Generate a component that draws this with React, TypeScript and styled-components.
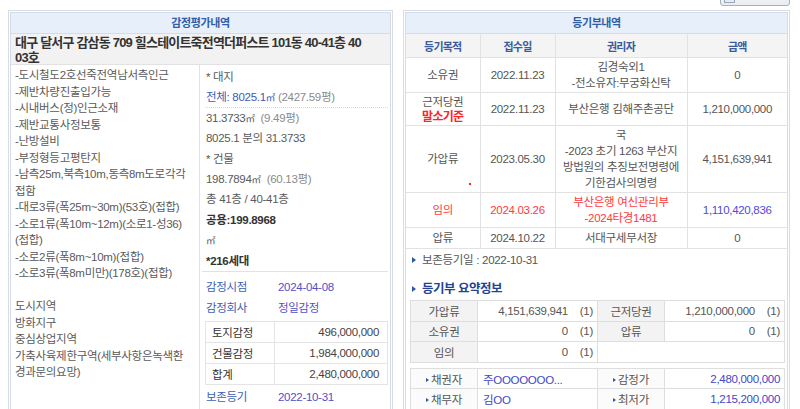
import React from 'react';
import styled, { createGlobalStyle } from 'styled-components';

const GlobalStyle = createGlobalStyle`
  html, body {
    margin: 0;
    padding: 0;
    background: #ffffff;
  }
  body {
    font-family: "Liberation Sans", "Noto Sans CJK KR", sans-serif;
    font-size: 11.5px;
    letter-spacing: -0.3px;
    color: #555555;
  }
`;

const Page = styled.div`
  display: flex;
  flex-direction: column;
  width: 800px;
  height: 409px;
  overflow: hidden;
`;

// 상단 잘린 버튼
const TopBar = styled.div`
  flex-shrink: 0;
  height: 10px;
  display: flex;
  justify-content: flex-end;
  padding-right: 10px;
  overflow: hidden;
`;

const TopButton = styled.div`
  width: 70px;
  height: 22px;
  margin-top: -16px;
  box-sizing: border-box;
  border: 1px solid #aab0b9;
  border-radius: 3px;
  background: linear-gradient(#ffffff, #e9ecf0);
  display: flex;
  align-items: flex-end;
  padding: 0 0 2px 3px;
`;

const TopButtonIcon = styled.span`
  width: 11px;
  height: 10px;
  box-sizing: border-box;
  border: 1px solid #9aa8bb;
  background: #e3eaf4;
`;

const Columns = styled.div`
  flex-shrink: 0;
  display: flex;
  gap: 10px;
  padding-left: 8px;
  align-items: flex-start;
`;

const Panel = styled.section<{ $width: number }>`
  width: ${(p) => p.$width}px;
  height: 412px;
  box-sizing: border-box;
  border: 1px solid #d9dde3;
  padding: 1px;
`;

const Inner = styled.div`
  height: 100%;
  box-sizing: border-box;
  border: 1px solid #d3dce8;
`;

const PanelTitle = styled.div`
  height: 20px;
  line-height: 20px;
  background: #e6effa;
  border-bottom: 1px solid #d3dce8;
  text-align: center;
  font-size: 11px;
  font-weight: bold;
  letter-spacing: -0.4px;
  color: #2f5ea8;
`;

/* 감정평가내역 */
const Address = styled.div`
  padding: 1px 4px 0;
  height: 31px;
  box-sizing: border-box;
  background: #f2f2f2;
  border-bottom: 1px solid #e2e2e2;
  font-size: 13px;
  font-weight: bold;
  letter-spacing: -0.8px;
  line-height: 15px;
  color: #333333;
  white-space: nowrap;
`;

const AppraisalBody = styled.div`
  display: grid;
  grid-template-columns: 189px 1fr;
`;

const Remarks = styled.div`
  padding: 2px 0 0 4px;
  border-right: 1px solid #e2e2e2;
  min-height: 360px;
`;

const RemarkLine = styled.div`
  height: 16.5px;
  line-height: 16.5px;
  white-space: nowrap;
  color: #5a5a5a;
`;

const Details = styled.div`
  padding: 2px 2px 0 5px;
`;

const DetailRow = styled.div<{ $dotted?: boolean; $strong?: boolean }>`
  height: 20.4px;
  line-height: 20.4px;
  box-sizing: border-box;
  white-space: nowrap;
  padding-left: 1px;
  color: ${(p) => (p.$strong ? '#333333' : '#5a5a5a')};
  font-weight: ${(p) => (p.$strong ? 'bold' : 'normal')};
  border-bottom: ${(p) => (p.$dotted ? '1px dotted #d6d6d6' : 'none')};
`;

const Blue = styled.span`
  color: #3a5bb8;
`;

const Muted = styled.span`
  color: #8a8a8a;
  margin-left: 3px;
`;

const Unit = styled.span`
  font-size: 9.5px;
`;

const Divider = styled.div`
  height: 0;
  border-top: 1px solid #e2e2e2;
  margin-left: -3px;
`;

const InfoRow = styled.div<{ $gap?: number }>`
  display: flex;
  height: 21px;
  line-height: 21px;
  margin-top: ${(p) => p.$gap ?? 0}px;
  padding-left: 1px;
`;

const InfoLabel = styled.span`
  width: 72px;
  color: #3a5fb4;
`;

const InfoValue = styled.span`
  color: #5050c8;
`;

const PriceTable = styled.table`
  width: 100%;
  margin-top: 2px;
  border-collapse: collapse;
  table-layout: fixed;
`;

const PriceLabel = styled.td`
  width: 62px;
  height: 20px;
  padding: 0 0 0 6px;
  border: 1px solid #e4e4e4;
  color: #333333;
`;

const PriceValue = styled.td`
  height: 20px;
  padding: 0 8px 0 0;
  border: 1px solid #e4e4e4;
  text-align: right;
  color: #444444;
`;

/* 등기부내역 */
const RegTable = styled.table`
  width: 100%;
  border-collapse: collapse;
  table-layout: fixed;
`;

const HeadCell = styled.th`
  height: 23px;
  padding: 0;
  background: #f4f4f4;
  color: #3b5b9c;
  font-size: 11px;
  font-weight: bold;
  letter-spacing: -0.8px;
  border-bottom: 1px solid #e2e2e2;
  border-left: 1px solid #e2e2e2;

  &:first-child {
    border-left: none;
  }
`;

const Cell = styled.td<{ $red?: boolean; $blue?: boolean }>`
  position: relative;
  height: 18px;
  padding: 1px 2px;
  line-height: 16px;
  text-align: center;
  white-space: nowrap;
  border-bottom: 1px solid #e2e2e2;
  border-left: 1px solid #e2e2e2;
  color: ${(p) => (p.$blue ? '#4b4be0' : p.$red ? '#ff3b3b' : '#555555')};

  &:first-child {
    border-left: none;
  }
`;

const BaseMark = styled.div`
  color: #ff2323;
  font-size: 12px;
  font-weight: bold;
  line-height: 14px;
  letter-spacing: -0.7px;
`;

const RedDot = styled.span`
  position: absolute;
  left: 63px;
  bottom: 7px;
  width: 2px;
  height: 2px;
  background: #ff2020;
`;

const SummaryArea = styled.div`
  padding: 0 2px 0 4px;
`;

const Bullet = styled.span<{ $size?: number }>`
  display: inline-block;
  width: 0;
  height: 0;
  border-left: ${(p) => p.$size ?? 4}px solid #2c58a8;
  border-top: ${(p) => (p.$size ?? 4) - 0.5}px solid transparent;
  border-bottom: ${(p) => (p.$size ?? 4) - 0.5}px solid transparent;
  margin-right: ${(p) => ((p.$size ?? 4) > 3 ? 6 : 2)}px;
  vertical-align: middle;
  position: relative;
  top: -1px;
`;

const NoteLine = styled.div`
  height: 18px;
  line-height: 18px;
  margin-top: 2px;
  padding-left: 2px;
  color: #555555;
`;

const SummaryTitle = styled.div`
  height: 18px;
  line-height: 18px;
  margin-top: 11px;
  padding-left: 2px;
  font-size: 12.5px;
  font-weight: bold;
  letter-spacing: -0.5px;
  color: #1f4590;
`;

const SumTable = styled.table<{ $gap?: number }>`
  width: 100%;
  margin-top: ${(p) => p.$gap ?? 2}px;
  border-collapse: collapse;
  table-layout: fixed;
`;

const SumLabel = styled.td<{ $plain?: boolean }>`
  height: 19.6px;
  padding: 0;
  text-align: center;
  white-space: nowrap;
  background: ${(p) => (p.$plain ? '#fbfbfb' : '#f3f3f3')};
  border: 1px solid #dedede;
  color: #555555;
`;

const SumValue = styled.td<{ $left?: boolean; $blue?: boolean }>`
  height: 19.6px;
  padding: ${(p) => (p.$left ? '0 0 0 5px' : '0 4px 0 0')};
  text-align: ${(p) => (p.$left ? 'left' : 'right')};
  white-space: nowrap;
  background: #ffffff;
  border: 1px solid #dedede;
  color: ${(p) => (p.$blue ? '#4048c8' : '#555555')};
`;

const Count = styled.span`
  margin-left: 12px;
`;

const remarkLines = [
  '-도시철도2호선죽전역남서측인근',
  '-제반차량진출입가능',
  '-시내버스(정)인근소재',
  '-제반교통사정보통',
  '-난방설비',
  '-부정형등고평탄지',
  '-남측25m,북측10m,동측8m도로각각',
  '접함',
  '-대로3류(폭25m~30m)(53호)(접합)',
  '-소로1류(폭10m~12m)(소로1-성36)',
  '(접합)',
  '-소로2류(폭8m~10m)(접합)',
  '-소로3류(폭8m미만)(178호)(접합)',
  '',
  '도시지역',
  '방화지구',
  '중심상업지역',
  '가축사육제한구역(세부사항은녹색환',
  '경과문의요망)',
];

interface RegistryRow {
  kind: string;
  date: string;
  holder: string[];
  amount: string;
  base?: boolean;
  dot?: boolean;
  red?: boolean;
  blueAmount?: boolean;
}

const registry: RegistryRow[] = [
  { kind: '소유권', date: '2022.11.23', holder: ['김경숙외1', '-전소유자:무궁화신탁'], amount: '0' },
  {
    kind: '근저당권', base: true, date: '2022.11.23', holder: ['부산은행 김해주촌공단'], amount: '1,210,000,000',
  },
  {
    kind: '가압류',
    dot: true,
    date: '2023.05.30',
    holder: ['국', '-2023 초기 1263 부산지', '방법원의 추징보전명령에', '기한검사의명령'],
    amount: '4,151,639,941',
  },
  {
    kind: '임의',
    red: true,
    date: '2024.03.26',
    holder: ['부산은행 여신관리부', '-2024타경1481'],
    amount: '1,110,420,836',
    blueAmount: true,
  },
  { kind: '압류', date: '2024.10.22', holder: ['서대구세무서장'], amount: '0' },
];

function App(): React.ReactElement {
  return (
    <>
      <GlobalStyle />
      <Page>
        <TopBar>
          <TopButton>
            <TopButtonIcon />
          </TopButton>
        </TopBar>
        <Columns>
          {/* 감정평가내역 */}
          <Panel $width={385}>
            <Inner>
              <PanelTitle>감정평가내역</PanelTitle>
              <Address>
                대구 달서구 감삼동 709 힐스테이트죽전역더퍼스트 101동 40-41층 40
                <br />
                03호
              </Address>
              <AppraisalBody>
                <Remarks>
                  {remarkLines.map((line, i) => (
                    // eslint-disable-next-line react/no-array-index-key
                    <RemarkLine key={i}>{line || '\u00a0'}</RemarkLine>
                  ))}
                </Remarks>
                <Details>
                  <DetailRow>* 대지</DetailRow>
                  <DetailRow $dotted>
                    <Blue>
                      전체: 8025.1
                      <Unit>㎡</Unit>
                    </Blue>
                    <Muted>(2427.59평)</Muted>
                  </DetailRow>
                  <DetailRow>
                    31.3733
                    <Unit>㎡</Unit>
                    <Muted>&nbsp;(9.49평)</Muted>
                  </DetailRow>
                  <DetailRow>8025.1 분의 31.3733</DetailRow>
                  <DetailRow>* 건물</DetailRow>
                  <DetailRow>
                    198.7894
                    <Unit>㎡</Unit>
                    <Muted>&nbsp;(60.13평)</Muted>
                  </DetailRow>
                  <DetailRow>총 41층 / 40-41층</DetailRow>
                  <DetailRow $strong>공용:199.8968</DetailRow>
                  <DetailRow>
                    <Unit>㎡</Unit>
                  </DetailRow>
                  <DetailRow $strong>*216세대</DetailRow>
                  <Divider />
                  <InfoRow $gap={5}>
                    <InfoLabel>감정시점</InfoLabel>
                    <InfoValue>2024-04-08</InfoValue>
                  </InfoRow>
                  <InfoRow>
                    <InfoLabel>감정회사</InfoLabel>
                    <InfoValue>정일감정</InfoValue>
                  </InfoRow>
                  <PriceTable>
                    <tbody>
                      <tr>
                        <PriceLabel>토지감정</PriceLabel>
                        <PriceValue>496,000,000</PriceValue>
                      </tr>
                      <tr>
                        <PriceLabel>건물감정</PriceLabel>
                        <PriceValue>1,984,000,000</PriceValue>
                      </tr>
                      <tr>
                        <PriceLabel>합계</PriceLabel>
                        <PriceValue>2,480,000,000</PriceValue>
                      </tr>
                    </tbody>
                  </PriceTable>
                  <InfoRow $gap={2}>
                    <InfoLabel>보존등기</InfoLabel>
                    <InfoValue>2022-10-31</InfoValue>
                  </InfoRow>
                </Details>
              </AppraisalBody>
            </Inner>
          </Panel>

          {/* 등기부내역 */}
          <Panel $width={387}>
            <Inner>
              <PanelTitle>등기부내역</PanelTitle>
              <RegTable>
                <colgroup>
                  <col style={{ width: 74 }} />
                  <col style={{ width: 75 }} />
                  <col style={{ width: 132 }} />
                  <col />
                </colgroup>
                <thead>
                  <tr>
                    <HeadCell>등기목적</HeadCell>
                    <HeadCell>접수일</HeadCell>
                    <HeadCell>권리자</HeadCell>
                    <HeadCell>금액</HeadCell>
                  </tr>
                </thead>
                <tbody>
                  {registry.map((row) => (
                    <tr key={row.kind}>
                      <Cell $red={row.red}>
                        {row.kind}
                        {row.base && <BaseMark>말소기준</BaseMark>}
                        {row.dot && <RedDot />}
                      </Cell>
                      <Cell $red={row.red}>{row.date}</Cell>
                      <Cell $red={row.red}>
                        {row.holder.map((line) => (
                          <div key={line}>{line}</div>
                        ))}
                      </Cell>
                      <Cell $red={row.red} $blue={row.blueAmount}>{row.amount}</Cell>
                    </tr>
                  ))}
                </tbody>
              </RegTable>

              <SummaryArea>
                <NoteLine>
                  <Bullet $size={4} />
                  보존등기일 : 2022-10-31
                </NoteLine>
                <SummaryTitle>
                  <Bullet $size={4} />
                  등기부 요약정보
                </SummaryTitle>
                <SumTable>
                  <colgroup>
                    <col style={{ width: 67 }} />
                    <col style={{ width: 120 }} />
                    <col style={{ width: 67 }} />
                    <col />
                  </colgroup>
                  <tbody>
                    <tr>
                      <SumLabel>가압류</SumLabel>
                      <SumValue>
                        4,151,639,941
                        <Count>(1)</Count>
                      </SumValue>
                      <SumLabel>근저당권</SumLabel>
                      <SumValue>
                        1,210,000,000
                        <Count>(1)</Count>
                      </SumValue>
                    </tr>
                    <tr>
                      <SumLabel>소유권</SumLabel>
                      <SumValue>
                        0
                        <Count>(1)</Count>
                      </SumValue>
                      <SumLabel>압류</SumLabel>
                      <SumValue>
                        0
                        <Count>(1)</Count>
                      </SumValue>
                    </tr>
                    <tr>
                      <SumLabel>임의</SumLabel>
                      <SumValue>
                        0
                        <Count>(1)</Count>
                      </SumValue>
                      <SumValue colSpan={2} />
                    </tr>
                  </tbody>
                </SumTable>
                <SumTable $gap={5}>
                  <colgroup>
                    <col style={{ width: 67 }} />
                    <col style={{ width: 120 }} />
                    <col style={{ width: 67 }} />
                    <col />
                  </colgroup>
                  <tbody>
                    <tr>
                      <SumLabel $plain>
                        <Bullet $size={3} />
                        채권자
                      </SumLabel>
                      <SumValue $left $blue>주OOOOOOO...</SumValue>
                      <SumLabel $plain>
                        <Bullet $size={3} />
                        감정가
                      </SumLabel>
                      <SumValue $blue>2,480,000,000</SumValue>
                    </tr>
                    <tr>
                      <SumLabel $plain>
                        <Bullet $size={3} />
                        채무자
                      </SumLabel>
                      <SumValue $left $blue>김OO</SumValue>
                      <SumLabel $plain>
                        <Bullet $size={3} />
                        최저가
                      </SumLabel>
                      <SumValue $blue>1,215,200,000</SumValue>
                    </tr>
                  </tbody>
                </SumTable>
              </SummaryArea>
            </Inner>
          </Panel>
        </Columns>
      </Page>
    </>
  );
}

export default App;
